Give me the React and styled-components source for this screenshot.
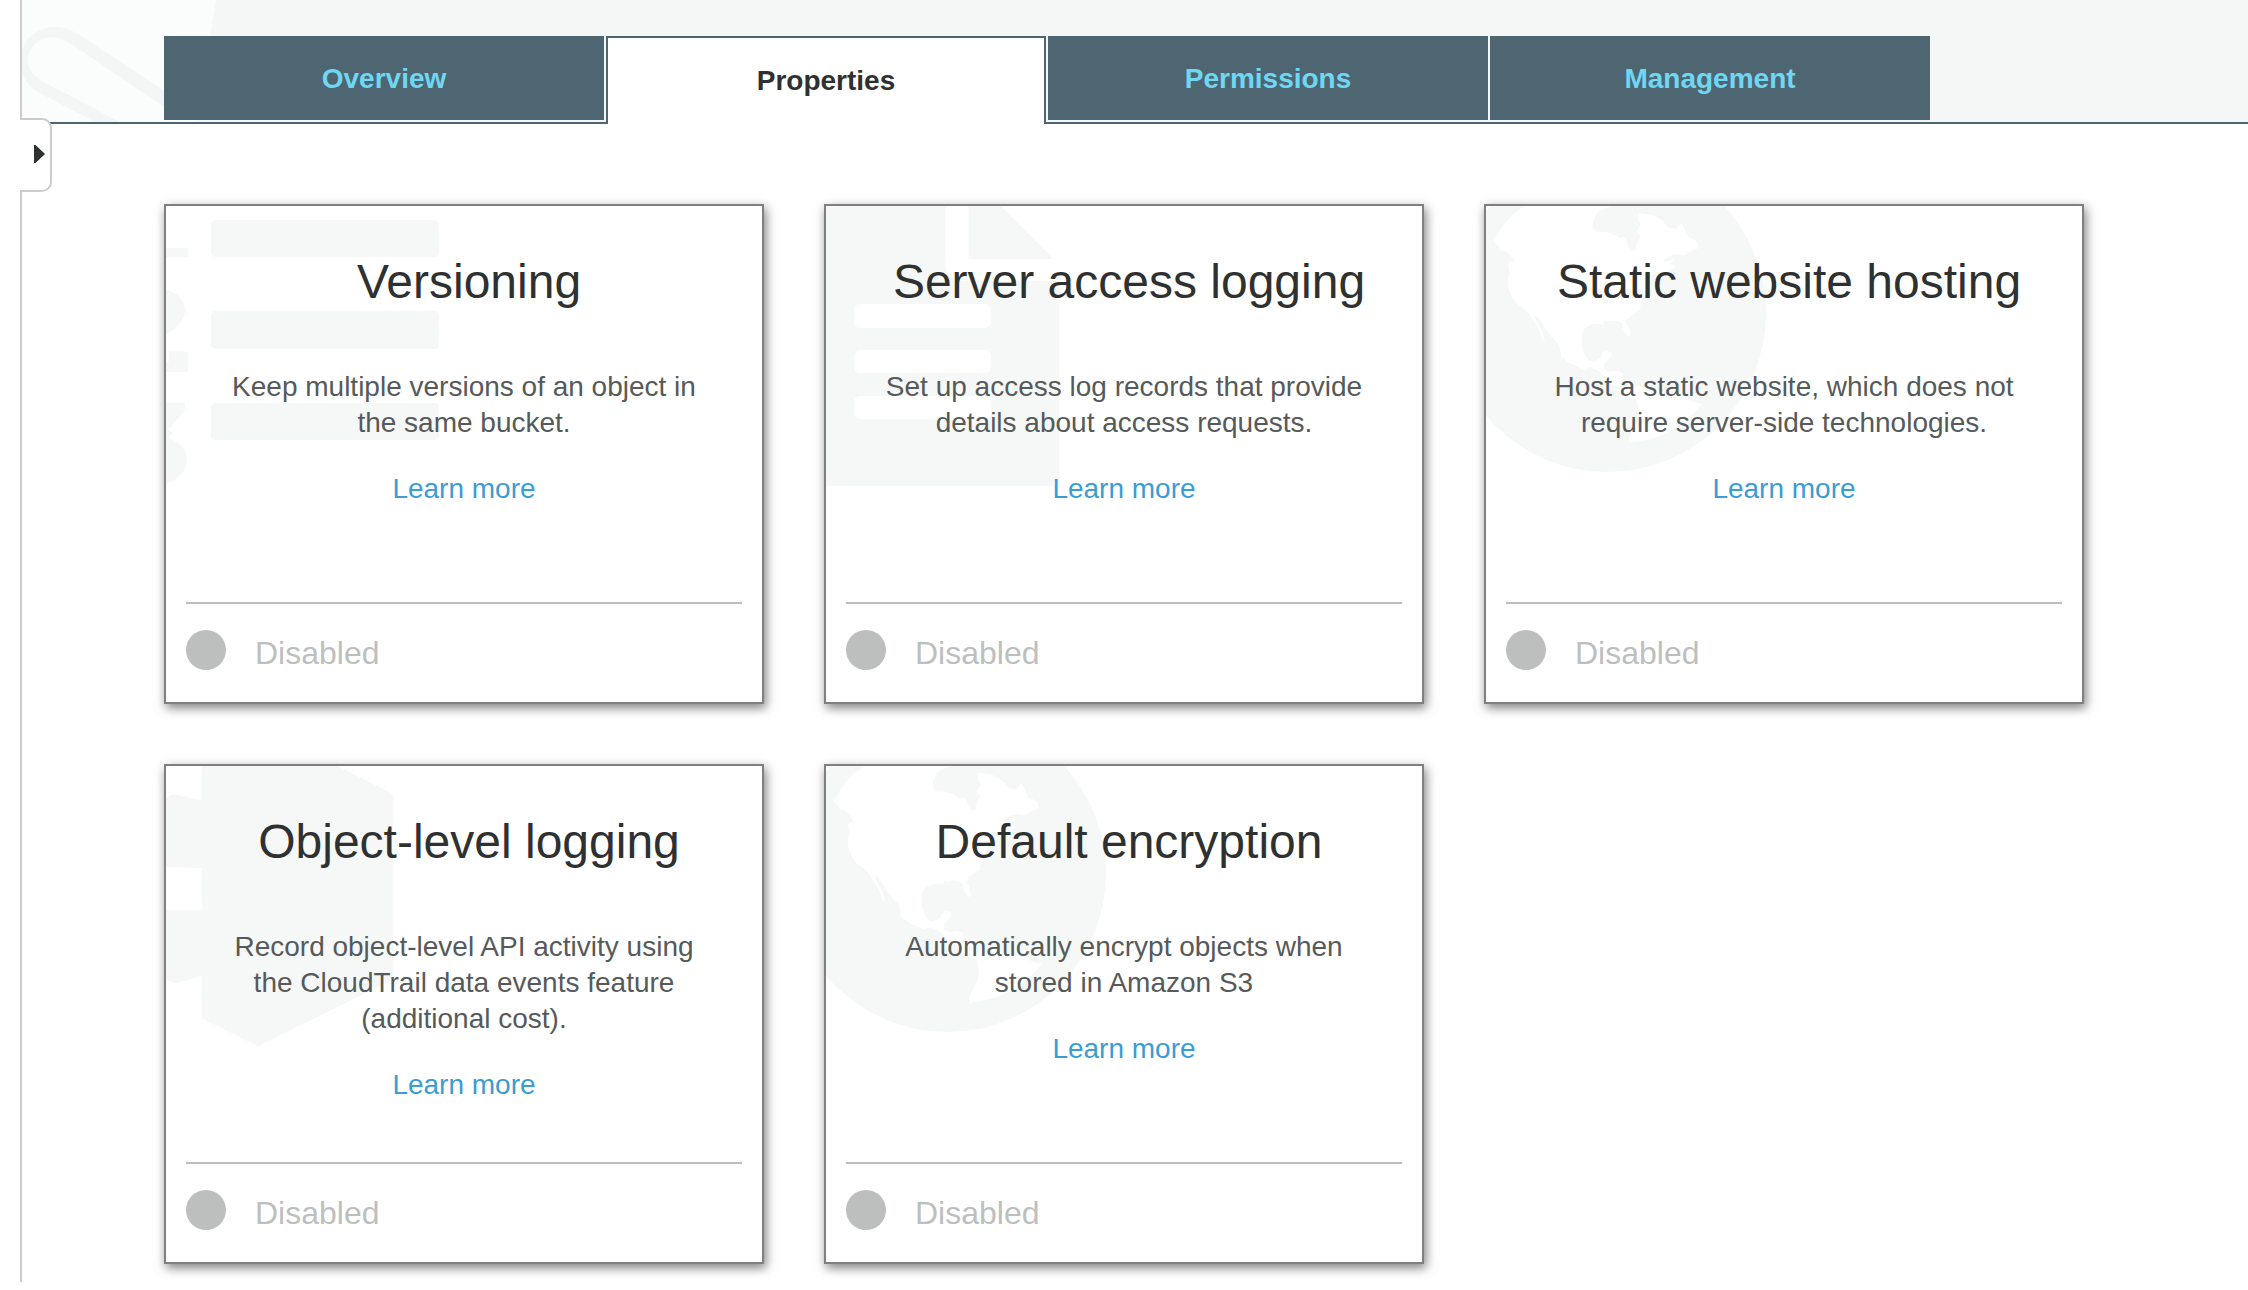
import React, { useState } from "react";
import styled, { createGlobalStyle, css } from "styled-components";

const GlobalStyle = createGlobalStyle`
  *, *::before, *::after { box-sizing: border-box; }
  body {
    margin: 0;
    background: #fff;
    font-family: "Liberation Sans", Arial, sans-serif;
    font-size: 28px;
    line-height: 36px;
    color: #565a5b;
  }
`;

const Page = styled.div`
  min-height: 100vh;
  padding: 0 0 8px 20px;
  display: flex;
`;

const Main = styled.main`
  position: relative;
  flex: 1;
  min-width: 0;
  border-left: 2px solid #ccc;
`;

const Header = styled.header`
  position: relative;
  padding: 36px 0 0 142px;
  background: #f4f7f6;
  box-shadow: inset 0 -2px 0 #4e6671;
`;

const HeaderArt = styled.svg`
  position: absolute;
  left: 0;
  top: 0;
  width: 200px;
  height: 122px;
`;

const Tabs = styled.div`
  position: relative;
  display: grid;
  grid-template-columns: repeat(4, minmax(0, 440px));
  gap: 2px;
`;

const Tab = styled.button`
  height: 84px;
  margin: 0 0 4px;
  padding: 2px 0 0;
  border: 0;
  background: #4e6671;
  color: #6fd7f1;
  font: bold 28px/36px "Liberation Sans", Arial, sans-serif;
  cursor: pointer;

  ${({ $active }) =>
    $active &&
    css`
      height: 88px;
      margin: 0;
      padding: 0;
      border: 2px solid #4e6671;
      border-bottom: 0;
      background: #fff;
      color: #2f3131;
    `}
`;

const PanelToggle = styled.button`
  position: absolute;
  left: -2px;
  top: 118px;
  width: 32px;
  height: 74px;
  padding: 0 5px 2px 0;
  display: flex;
  align-items: center;
  justify-content: flex-end;
  border: 2px solid #ccc;
  border-left: 0;
  border-radius: 0 10px 10px 0;
  background: #fff;
  cursor: pointer;
`;

const Cards = styled.section`
  display: grid;
  grid-template-columns: repeat(auto-fill, 600px);
  gap: 60px;
  padding: 80px 20px 18px 142px;
`;

const CardBox = styled.article`
  position: relative;
  min-height: 500px;
  padding-top: 48px;
  display: flex;
  flex-direction: column;
  border: 2px solid #808080;
  background: #fff;
  box-shadow: 2px 4px 10px rgba(0, 0, 0, 0.5);
  text-align: center;
`;

const CardArt = styled.svg`
  position: absolute;
  left: 0;
  top: 0;
  width: 300px;
  height: 300px;
  fill: #f5f8f7;
`;

const CardBody = styled.div`
  position: relative;
  padding: 0 50px;
`;

const CardTitle = styled.h2`
  margin: 0 0 59px;
  padding-left: 10px;
  color: #2f3131;
  font-size: 48px;
  font-weight: normal;
  line-height: 56px;
`;

const CardText = styled.p`
  margin: 0 0 30px;
`;

const MoreLink = styled.a`
  color: #3b9cd6;
  text-decoration: none;
`;

const CardFooter = styled.footer`
  display: flex;
  align-items: flex-start;
  gap: 29px;
  height: 100px;
  margin: auto 20px 0;
  padding-top: 26px;
  border-top: 2px solid #bdbfbe;
  color: #bdbfbe;
  font-size: 32px;
  line-height: 46px;
`;

const StatusDot = styled.span`
  width: 40px;
  height: 40px;
  border-radius: 50%;
  background: #bdbfbe;
`;

const GLOBE_LAND =
  "M135 18L100 42L70 75L40 125L52 134L62 150L76 153L98 176L101 190L90 186L84 198L88 218L83 240L84 262Q94 296 112 312L135 328Q150 342 156 356L178 390L188 420L195 426L187 396L174 372L163 348L176 352L190 378L218 415L235 432Q243 445 243 468L262 486L310 508L330 502L350 510Q374 524 378 536Q390 552 408 556L428 580L470 600Q478 625 476 655Q460 690 450 704L446 728Q505 724 560 700Q625 664 666 612L635 604Q605 585 560 580L500 562L460 556L430 545L428 518L408 512L385 517L371 508L373 490L388 473L396 460Q388 452 374 454Q364 460 361 473Q345 486 329 482Q310 466 306 435Q304 408 309 390Q325 374 345 371L370 374L372 360L378 366Q402 358 420 365L430 374L428 385L440 406L450 412L453 402L446 378L436 366Q450 344 480 330L482 312L500 270L520 215L560 216L586 200L572 192L584 178L545 186Q555 170 590 163L615 166L640 150L656 144L652 124L625 112L615 90L605 68L590 86L566 84L545 60L515 44L475 39L472 56L483 72L469 95L480 108L470 130L468 149L456 153L445 138L438 118L430 112L418 114Q390 92 350 95L338 84L340 60L352 36L372 26L392 18Z";

const ListArt = () => (
  <CardArt viewBox="0 0 300 300" aria-hidden="true">
    <rect x="45" y="14" width="228" height="37" rx="5" />
    <rect x="45" y="105" width="228" height="38" rx="5" />
    <rect x="45" y="197" width="228" height="37" rx="5" />
    <path d="M0 42H22V51H0Z" />
    <path d="M0 83Q19 90 19.300 105Q18 118 0 129Z" />
    <path d="M3 145.500H22V166H0V156H2.500Z" />
    <path d="M0 196.500H18.700V205L2 224L6.700 226L3 232Q21 239 21 254Q20 270 0 278V196.500Z" />
  </CardArt>
);

const DocumentArt = () => (
  <CardArt viewBox="0 0 300 300" aria-hidden="true">
    <path d="M0 0H119.500V57Q120 75 138 75H233.500V272Q233 280 225 280H0Z" />
    <path d="M142.500 0H175L221 46Q225 50 226 53H142.500Z" />
    <g fill="#fff">
      <rect x="28" y="98" width="137" height="24" rx="6" />
      <rect x="28" y="144" width="137" height="23" rx="6" />
      <rect x="28" y="190" width="137" height="23" rx="6" />
    </g>
  </CardArt>
);

const GlobeArt = () => (
  <CardArt viewBox="18 18 900 900" aria-hidden="true">
    <circle cx="382" cy="340" r="476" />
    <path d={GLOBE_LAND} fill="#fff" />
  </CardArt>
);

const CubeArt = () => (
  <CardArt viewBox="0 0 300 300" aria-hidden="true">
    <path d="M36 0H171L227 28V213.500L94 279.500Q92 280 90 279.500L36 252.500V209.500L10 217.500L0 214V144H36V102L0 101V33Q4 28 8 28.500L36 34Z" />
  </CardArt>
);

const TABS = ["Overview", "Properties", "Permissions", "Management"];

const CARDS = [
  {
    title: "Versioning",
    text: "Keep multiple versions of an object in the same bucket.",
    Art: ListArt,
  },
  {
    title: "Server access logging",
    text: "Set up access log records that provide details about access requests.",
    Art: DocumentArt,
  },
  {
    title: "Static website hosting",
    text: "Host a static website, which does not require server-side technologies.",
    Art: GlobeArt,
  },
  {
    title: "Object-level logging",
    text: "Record object-level API activity using the CloudTrail data events feature (additional cost).",
    Art: CubeArt,
  },
  {
    title: "Default encryption",
    text: "Automatically encrypt objects when stored in Amazon S3",
    Art: GlobeArt,
  },
];

function PropertyCard({ title, text, Art }) {
  return (
    <CardBox>
      <Art />
      <CardBody>
        <CardTitle>{title}</CardTitle>
        <CardText>{text}</CardText>
        <MoreLink href="#learn-more">Learn more</MoreLink>
      </CardBody>
      <CardFooter>
        <StatusDot />
        <span>Disabled</span>
      </CardFooter>
    </CardBox>
  );
}

export default function App() {
  const [active, setActive] = useState("Properties");
  return (
    <Page>
      <GlobalStyle />
      <Main>
        <Header>
          <HeaderArt viewBox="36 0 600 366" aria-hidden="true">
            <path d="M36 0H618L558 366H36Z" fill="#fafdfc" />
            <path
              d="M500 297L205 103Q170 80 130 80C70 85 36 125 30 180C34 240 60 262 90 280L255 366H330L100 245C70 230 54 205 54 180C56 140 90 112 125 112C150 112 165 120 185 133L500 346Z"
              fill="#f4f6f5"
            />
          </HeaderArt>
          <Tabs role="tablist">
            {TABS.map((name) => (
              <Tab
                key={name}
                type="button"
                role="tab"
                aria-selected={name === active}
                $active={name === active}
                onClick={() => setActive(name)}
              >
                {name}
              </Tab>
            ))}
          </Tabs>
        </Header>
        <PanelToggle type="button" aria-label="Expand navigation">
          <svg width="11" height="18" viewBox="0 0 11 18" aria-hidden="true">
            <path d="M0 0H1.500L11 9L1.500 18H0Z" fill="#2f3131" />
          </svg>
        </PanelToggle>
        <Cards>
          {CARDS.map((card) => (
            <PropertyCard key={card.title} {...card} />
          ))}
        </Cards>
      </Main>
    </Page>
  );
}
